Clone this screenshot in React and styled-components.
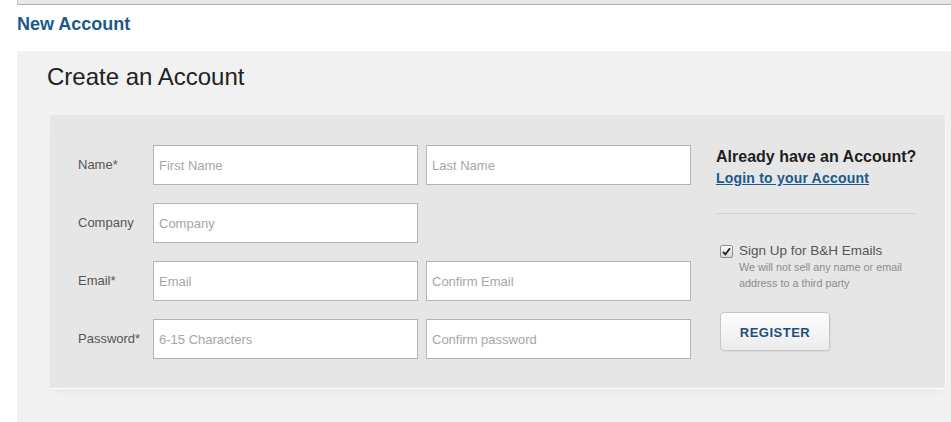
import React from 'react';
import styled, { createGlobalStyle } from 'styled-components';

const Global = createGlobalStyle`
  body {
    margin: 0;
    background: #fff;
    font-family: "Liberation Sans", Arial, sans-serif;
  }
`

const Page = styled.div`
  width: 951px;
  height: 422px;
  overflow: hidden;
  padding-left: 17px;
  box-sizing: border-box;
  background: #fff;
`

const TopBar = styled.div`
  height: 4px;
  background: #e8e8e8;
  border-left: 1px solid #c4c4c4;
  border-bottom: 1px solid #b2b2b2;
`

const PageTitle = styled.h1`
  margin: 9px 0 0;
  font-size: 18px;
  font-weight: bold;
  color: #1b5a8c;
  line-height: 21px;
`

const Panel = styled.div`
  margin-top: 16px;
  background: #f1f1f1;
  padding: 12px 5px 40px 30px;
`

const PanelTitle = styled.h2`
  margin: 0;
  font-size: 24px;
  font-weight: normal;
  color: #222;
  line-height: 28px;
`

const FormBox = styled.div`
  margin: 24px 0 0 3px;
  background: #e6e6e6;
  padding: 30px 0 29px 28px;
  display: flex;
  border-bottom: 1px solid #fff;
  border-right: 1px solid #f8f8f8;
  box-shadow: 0 6px 10px -6px rgba(0, 0, 0, 0.08);
`

const Fields = styled.div`
  display: grid;
  grid-template-columns: 67px 265px 265px;
  grid-auto-rows: 40px;
  column-gap: 8px;
  row-gap: 18px;
`

const Label = styled.label`
  display: flex;
  align-items: center;
  font-size: 13px;
  color: #555;
  white-space: nowrap;
  padding-bottom: 2px;
`

const Input = styled.input`
  box-sizing: border-box;
  width: 100%;
  height: 40px;
  border: 1px solid #b4b4b4;
  background: #fff;
  padding: 0 5px;
  font-family: "Liberation Sans", Arial, sans-serif;
  font-size: 13px;
  color: #333;
  outline: none;
  &::placeholder { color: #a6a6a6; }
`

const Side = styled.div`
  margin-left: 25px;
  width: 199px;
`

const SideTitle = styled.div`
  margin-top: 3px;
  font-size: 16px;
  font-weight: bold;
  color: #1e1e1e;
  line-height: 18px;
  white-space: nowrap;
`

const LoginLink = styled.a`
  display: block;
  margin-top: 3px;
  font-size: 14px;
  font-weight: bold;
  line-height: 18px;
  color: #1b5a8c;
  text-decoration: underline;
  letter-spacing: 0.2px;
`

const Divider = styled.hr`
  margin: 26px 0 0;
  border: 0;
  border-top: 1px solid #cfcfcf;
`

const CheckRow = styled.div`
  margin-top: 29px;
  display: flex;
  align-items: center;
  padding-left: 4px;
  gap: 6px;
  font-size: 13.5px;
  line-height: 16px;
  color: #555;
  white-space: nowrap;
`

const Box = styled.span`
  width: 11px;
  height: 11px;
  border: 1px solid #8e8e8e;
  border-radius: 2px;
  background: linear-gradient(#fafafa, #d8d8d8);
  display: flex;
  align-items: center;
  justify-content: center;
`

const Note = styled.p`
  margin: 0 0 0 23px;
  font-size: 10.8px;
  line-height: 16px;
  color: #8c8c8c;
  white-space: nowrap;
`

const Register = styled.button`
  margin: 21px 0 0 4px;
  width: 110px;
  height: 39px;
  border: 1px solid #c6c6c6;
  border-radius: 4px;
  background: linear-gradient(#fdfdfd, #ececec);
  font-family: "Liberation Sans", Arial, sans-serif;
  font-size: 13px;
  font-weight: bold;
  letter-spacing: 0.5px;
  color: #1b4f80;
  padding-top: 2px;
  box-shadow: 1px 1px 1px rgba(0, 0, 0, 0.05);
`

const rows = [
  { label: 'Name*', a: 'First Name', b: 'Last Name' },
  { label: 'Company', a: 'Company' },
  { label: 'Email*', a: 'Email', b: 'Confirm Email' },
  { label: 'Password*', a: '6-15 Characters', b: 'Confirm password' },
];

const App = () => (
  <Page>
    <Global />
    <TopBar />
    <PageTitle>New Account</PageTitle>
    <Panel>
      <PanelTitle>Create an Account</PanelTitle>
      <FormBox>
        <Fields>
          {rows.map(r => (
            <React.Fragment key={r.label}>
              <Label>{r.label}</Label>
              <Input placeholder={r.a} />
              {r.b ? <Input placeholder={r.b} /> : <span />}
            </React.Fragment>
          ))}
        </Fields>
        <Side>
          <SideTitle>Already have an Account?</SideTitle>
          <LoginLink href="#">Login to your Account</LoginLink>
          <Divider />
          <CheckRow>
            <Box>
              <svg width="9" height="9" viewBox="0 0 9 9">
                <path d="M1 4.8 L3.4 7.4 L8 1.2" fill="none" stroke="#222" strokeWidth="1.8" />
              </svg>
            </Box>
            Sign Up for B&amp;H Emails
          </CheckRow>
          <Note>We will not sell any name or email<br />address to a third party</Note>
          <Register>REGISTER</Register>
        </Side>
      </FormBox>
    </Panel>
  </Page>
);

export default App;
